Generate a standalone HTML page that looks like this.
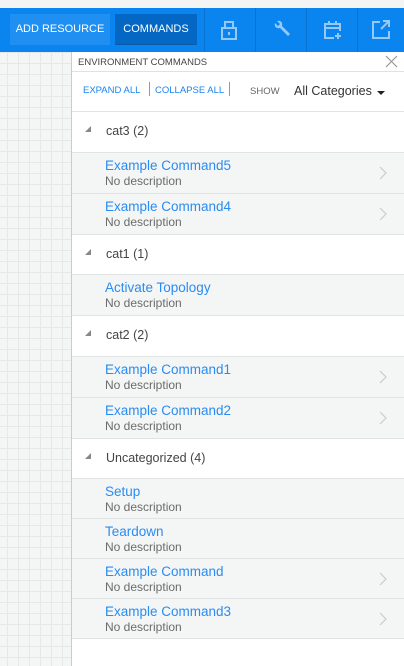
<!DOCTYPE html><html><head><style>
*{margin:0;padding:0;box-sizing:border-box}
body{width:404px;height:666px;overflow:hidden;position:relative;font-family:"Liberation Sans",Arial,sans-serif;background:#f4f5f5;
background-image:linear-gradient(#e6e8e8 1px,transparent 1px),linear-gradient(90deg,#e6e8e8 1px,transparent 1px);background-size:11px 11px;background-position:7px 8px}
.top{position:absolute;left:0;top:0;width:404px;height:8px;background:#f4f4f4}
.bar{position:absolute;left:0;top:8px;width:404px;height:44px;background:#0a84ee}
.btn{position:absolute;top:6px;height:31px;color:#fff;font-size:11px;line-height:31px;text-align:center}
.sep{position:absolute;top:0;width:1px;height:44px;background:#0872d0}
.ic{position:absolute;top:11px}
.panel{position:absolute;left:71px;top:52px;width:333px;height:614px;background:#fff;border-left:1px solid #c9cccd}
.abs{position:absolute}
.hdr{position:absolute;left:0;width:332px;background:#fff;border-bottom:1px solid #e1e4e5}
.hdr .t{position:absolute;left:34px;top:12px;font-size:12.5px;color:#444}
.hdr .tri{position:absolute;left:13px;top:14px;width:0;height:0;border-left:6px solid transparent;border-bottom:6px solid #888}
.it{position:absolute;left:0;width:332px;height:41px;background:#f4f5f5;border-bottom:1px solid #dfe3e5}
.it .n{position:absolute;left:33px;top:5px;font-size:13.5px;color:#2a8cf2}
.it .d{position:absolute;left:33px;top:21px;font-size:12px;color:#6b6b6b}
.it svg{position:absolute;left:307px;top:13px}
</style></head><body>
<div class="top"></div>
<div class="bar">
<div class="btn" style="left:10px;width:100px;background:#1f8ff1">ADD RESOURCE</div>
<div class="btn" style="left:115px;width:82px;background:#0567c4;border-bottom:1px solid #0a5aa8">COMMANDS</div>
<div class="sep" style="left:204px"></div><div class="sep" style="left:255px"></div><div class="sep" style="left:306px"></div><div class="sep" style="left:357px"></div>
<svg class="ic" style="left:220px" width="18" height="22" viewBox="0 0 18 22" fill="none" stroke="#95c9f7" stroke-width="2"><rect x="2" y="9" width="14" height="11"/><path d="M5 9V3h8v6"/><path d="M9 13v3"/></svg>
<svg class="ic" style="left:272px" width="20" height="22" viewBox="0 0 20 22"><path d="M3 4l3 3 2-2-3-3c3-1 6 1 5 5l8 8-2 2-8-8c-4 1-6-2-5-5z" fill="#95c9f7"/></svg>
<svg class="ic" style="left:323px" width="20" height="22" viewBox="0 0 20 22" fill="none" stroke="#95c9f7" stroke-width="2"><path d="M11 19H2V5h15v7"/><path d="M2 9h15M6 2v4M13 2v4M15 14v6M12 17h6"/></svg>
<svg class="ic" style="left:372px" width="18" height="22" viewBox="0 0 18 22" fill="none" stroke="#95c9f7" stroke-width="2"><path d="M8 3H1v16h16v-7"/><path d="M11 2h6v6M17 2l-8 8"/></svg>
</div>
<div class="panel">
<div class="abs" style="left:6px;top:5px;font-size:9.5px;color:#444">ENVIRONMENT COMMANDS</div>
<svg class="abs" style="left:313px;top:3px" width="13" height="13" viewBox="0 0 13 13" stroke="#999" stroke-width="1.2"><path d="M1 1l11 11M12 1L1 12"/></svg>
<div class="abs" style="left:0;top:19px;width:332px;height:1px;background:#dfe2e3"></div>
<div class="abs" style="left:11px;top:33px;font-size:9.5px;color:#1a84f0">EXPAND ALL</div>
<div class="abs" style="left:77px;top:30px;width:1px;height:14px;background:#999"></div>
<div class="abs" style="left:83px;top:33px;font-size:9.5px;color:#1a84f0">COLLAPSE ALL</div>
<div class="abs" style="left:157px;top:30px;width:1px;height:14px;background:#999"></div>
<div class="abs" style="left:178px;top:34px;font-size:9.5px;color:#666">SHOW</div>
<div class="abs" style="left:222px;top:32px;font-size:12.5px;color:#333">All Categories</div>
<div class="abs" style="left:305px;top:39px;width:0;height:0;border-left:4px solid transparent;border-right:4px solid transparent;border-top:4px solid #222"></div>
<div class="abs" style="left:0;top:59px;width:332px;height:1px;background:#e1e4e5"></div>

<div class="hdr" style="top:60px;height:41px"><div class="tri"></div><div class="t">cat3 (2)</div></div>
<div class="it" style="top:101px"><div class="n">Example Command5</div><div class="d">No description</div><svg width="8" height="14" viewBox="0 0 8 14"><path d="M1 1l6 6-6 6" fill="none" stroke="#ccc" stroke-width="1.2"/></svg></div>
<div class="it" style="top:142px"><div class="n">Example Command4</div><div class="d">No description</div><svg width="8" height="14" viewBox="0 0 8 14"><path d="M1 1l6 6-6 6" fill="none" stroke="#ccc" stroke-width="1.2"/></svg></div>
<div class="hdr" style="top:183px;height:40px"><div class="tri"></div><div class="t">cat1 (1)</div></div>
<div class="it" style="top:223px"><div class="n">Activate Topology</div><div class="d">No description</div></div>
<div class="hdr" style="top:264px;height:41px"><div class="tri"></div><div class="t">cat2 (2)</div></div>
<div class="it" style="top:305px"><div class="n">Example Command1</div><div class="d">No description</div><svg width="8" height="14" viewBox="0 0 8 14"><path d="M1 1l6 6-6 6" fill="none" stroke="#ccc" stroke-width="1.2"/></svg></div>
<div class="it" style="top:346px"><div class="n">Example Command2</div><div class="d">No description</div><svg width="8" height="14" viewBox="0 0 8 14"><path d="M1 1l6 6-6 6" fill="none" stroke="#ccc" stroke-width="1.2"/></svg></div>
<div class="hdr" style="top:387px;height:40px"><div class="tri"></div><div class="t">Uncategorized (4)</div></div>
<div class="it" style="top:427px;height:40px"><div class="n">Setup</div><div class="d">No description</div></div>
<div class="it" style="top:467px;height:40px"><div class="n">Teardown</div><div class="d">No description</div></div>
<div class="it" style="top:507px;height:40px"><div class="n">Example Command</div><div class="d">No description</div><svg width="8" height="14" viewBox="0 0 8 14"><path d="M1 1l6 6-6 6" fill="none" stroke="#ccc" stroke-width="1.2"/></svg></div>
<div class="it" style="top:547px;height:40px"><div class="n">Example Command3</div><div class="d">No description</div><svg width="8" height="14" viewBox="0 0 8 14"><path d="M1 1l6 6-6 6" fill="none" stroke="#ccc" stroke-width="1.2"/></svg></div>
</div>
</body></html>
